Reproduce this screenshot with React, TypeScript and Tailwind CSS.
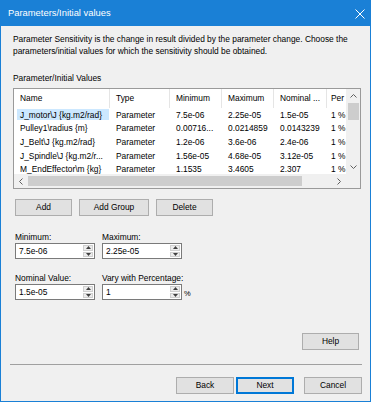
import React from "react";

const rows = [
  ["J_motor\\J {kg.m2/rad}", "Parameter", "7.5e-06", "2.25e-05", "1.5e-05", "1 %"],
  ["Pulley1\\radius {m}", "Parameter", "0.00716...", "0.0214859", "0.0143239", "1 %"],
  ["J_Belt\\J {kg.m2/rad}", "Parameter", "1.2e-06", "3.6e-06", "2.4e-06", "1 %"],
  ["J_Spindle\\J {kg.m2/r...", "Parameter", "1.56e-05", "4.68e-05", "3.12e-05", "1 %"],
  ["M_EndEffector\\m {kg}", "Parameter", "1.1535", "3.4605", "2.307", "1 %"],
];

const cols = [96, 60, 52, 52, 53, 30];
const headers = ["Name", "Type", "Minimum", "Maximum", "Nominal ...", "Per"];

function Up() {
  return (
    <svg width="5" height="3" viewBox="0 0 5 3">
      <path d="M0 3 L2.5 0 L5 3 Z" fill="#404040" />
    </svg>
  );
}
function Down() {
  return (
    <svg width="5" height="3" viewBox="0 0 5 3">
      <path d="M0 0 L2.5 3 L5 0 Z" fill="#404040" />
    </svg>
  );
}

function Spin({ value }: { value: string }) {
  return (
    <div className="flex h-[16px] w-[80px] border border-[#7a7a7a] bg-white">
      <div className="flex-1 pl-[3px] leading-[14px]">{value}</div>
      <div className="flex w-[12px] flex-col gap-[1px] p-[1px]">
        <div className="flex flex-1 items-center justify-center border border-[#cfcfcf] bg-[#ececec]">
          <Up />
        </div>
        <div className="flex flex-1 items-center justify-center border border-[#cfcfcf] bg-[#ececec]">
          <Down />
        </div>
      </div>
    </div>
  );
}

function Btn({ label, w, primary }: { label: string; w: number; primary?: boolean }) {
  return (
    <div
      className={
        "flex h-[17px] items-center justify-center bg-[#e1e1e1] " +
        (primary ? "border-2 border-[#0078d7]" : "border border-[#adadad]")
      }
      style={{ width: w }}
    >
      {label}
    </div>
  );
}

export default function App() {
  return (
    <div className="flex h-[402px] w-[371px] flex-col border border-[#1a80d6] bg-[#f0f0f0] font-['Liberation_Sans',Arial,sans-serif] text-[8.4px] text-black">
      {/* title bar */}
      <div className="flex h-[25px] shrink-0 items-center justify-between bg-[#1a80d6] pl-[7px] pr-[5px] text-[9.4px] text-white">
        <span>Parameters/Initial values</span>
        <svg width="10" height="10" viewBox="0 0 10 10">
          <path d="M0.5 0.5 L9.5 9.5 M9.5 0.5 L0.5 9.5" stroke="white" strokeWidth="1" />
        </svg>
      </div>

      <div className="flex flex-1 flex-col pl-[12px] pr-[8px]">
        <p className="mt-[7px] whitespace-nowrap leading-[12px]">
          Parameter Sensitivity is the change in result divided by the parameter change. Choose the
          <br />
          parameters/initial values for which the sensitivity should be obtained.
        </p>

        <div className="mt-[15px] leading-[12px]">Parameter/Initial Values</div>

        {/* list */}
        <div className="mt-[4px] flex h-[101px] w-[348px] flex-col border border-[#9a9a9a] bg-white">
          <div className="flex h-[85px] shrink-0">
            <div className="flex-1 overflow-hidden">
              <div className="flex h-[19px] items-center">
                {headers.map((h, i) => (
                  <div
                    key={h}
                    className={
                      "flex h-full shrink-0 items-center whitespace-nowrap border-r border-[#e5e5e5] " +
                      (i === 5 ? "pl-[4px]" : "pl-[6px]")
                    }
                    style={{ width: cols[i] }}
                  >
                    {h}
                  </div>
                ))}
              </div>
              {rows.map((r, ri) => (
                <div key={ri} className="flex h-[13.7px] items-center">
                  {r.map((c, ci) => (
                    <div
                      key={ci}
                      className="flex h-full shrink-0 items-center whitespace-nowrap"
                      style={{ width: cols[ci] }}
                    >
                      {ci === 0 ? (
                        <span
                          className={
                            "ml-[3px] flex h-[11px] w-[92px] items-center pl-[3px] " +
                            (ri === 0 ? "bg-[#cce8ff]" : "")
                          }
                        >
                          {c}
                        </span>
                      ) : (
                        <span className={ci === 5 ? "pl-[4px]" : "pl-[6px]"}>{c}</span>
                      )}
                    </div>
                  ))}
                </div>
              ))}
            </div>
            {/* vertical scrollbar */}
            <div className="flex w-[14px] shrink-0 flex-col items-center bg-[#f0f0f0]">
              <div className="flex h-[14px] items-center justify-center">
                <svg width="7" height="4" viewBox="0 0 7 4">
                  <path d="M0.5 3.5 L3.5 0.5 L6.5 3.5" stroke="#606060" fill="none" />
                </svg>
              </div>
              <div className="h-[17px] w-[11px] bg-[#cdcdcd]" />
              <div className="flex-1" />
              <div className="flex h-[14px] items-center justify-center">
                <svg width="7" height="4" viewBox="0 0 7 4">
                  <path d="M0.5 0.5 L3.5 3.5 L6.5 0.5" stroke="#606060" fill="none" />
                </svg>
              </div>
            </div>
          </div>
          {/* horizontal scrollbar */}
          <div className="flex h-[14px] items-center bg-[#f0f0f0]">
            <div className="flex w-[14px] items-center justify-center">
              <svg width="4" height="7" viewBox="0 0 4 7">
                <path d="M3.5 0.5 L0.5 3.5 L3.5 6.5" stroke="#606060" fill="none" />
              </svg>
            </div>
            <div className="h-[10px] w-[274px] bg-[#cdcdcd]" />
            <div className="flex-1" />
            <div className="flex w-[14px] items-center justify-center">
              <svg width="4" height="7" viewBox="0 0 4 7">
                <path d="M0.5 0.5 L3.5 3.5 L0.5 6.5" stroke="#606060" fill="none" />
              </svg>
            </div>
            <div className="w-[14px]" />
          </div>
        </div>

        {/* buttons */}
        <div className="mt-[10px] flex gap-[7px] pl-[2px]">
          <Btn label="Add" w={57} />
          <Btn label="Add Group" w={70} />
          <Btn label="Delete" w={57} />
        </div>

        <div className="mt-[15px] flex gap-[7px] pl-[2px]">
          <div className="flex flex-col">
            <div className="leading-[12px]">Minimum:</div>
            <Spin value="7.5e-06" />
          </div>
          <div className="flex flex-col">
            <div className="leading-[12px]">Maximum:</div>
            <Spin value="2.25e-05" />
          </div>
        </div>

        <div className="mt-[13px] flex gap-[7px] pl-[2px]">
          <div className="flex flex-col">
            <div className="leading-[12px]">Nominal Value:</div>
            <Spin value="1.5e-05" />
          </div>
          <div className="flex flex-col">
            <div className="leading-[12px]">Vary with Percentage:</div>
            <div className="flex items-end gap-[2px]">
              <Spin value="1" />
              <span className="text-[7.5px] leading-[12px]">%</span>
            </div>
          </div>
        </div>

        <div className="mt-[33px] flex justify-end pr-[3px]">
          <Btn label="Help" w={57} />
        </div>

        <div className="mt-[14px] ml-[-3px] h-px w-[352px] bg-[#a0a0a0]" />

        <div className="mt-[12px] flex justify-end">
          <Btn label="Back" w={58} />
          <div className="ml-[2px]">
            <Btn label="Next" w={58} primary />
          </div>
          <div className="ml-[10px]">
            <Btn label="Cancel" w={58} />
          </div>
        </div>
      </div>
    </div>
  );
}
